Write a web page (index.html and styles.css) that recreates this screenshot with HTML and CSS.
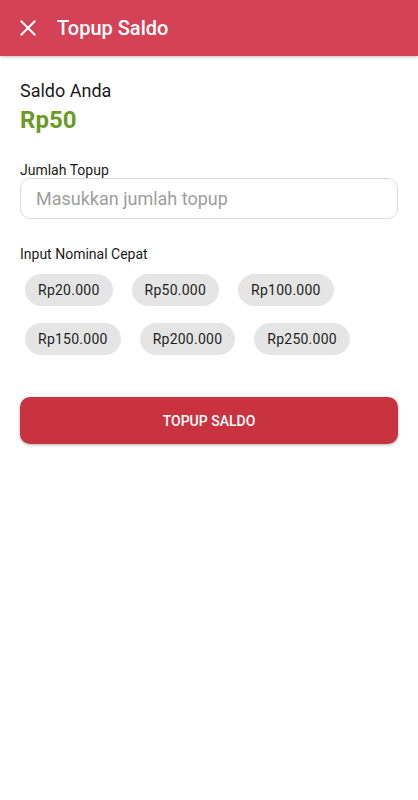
FILE: index.html
```html
<!DOCTYPE html>
<html lang="id">
  <head>
    <meta charset="UTF-8" />
    <meta name="viewport" content="width=device-width, initial-scale=1.0" />
    <title>Topup Saldo</title>
    <link rel="stylesheet" href="styles.css">
  </head>
  <body>
    <div class="appbar">
      <button class="close-btn" aria-label="Tutup">
        <svg width="16" height="16" viewBox="0 0 16 16">
          <path d="M1.5 1.5L14.5 14.5M14.5 1.5L1.5 14.5" stroke="#fff" stroke-width="2" stroke-linecap="square" />
        </svg>
      </button>
      <h1>Topup Saldo</h1>
    </div>
    <div class="content">
      <div class="saldo-label">Saldo Anda</div>
      <div class="saldo-value">Rp50</div>

      <label class="field-label" for="jumlah">Jumlah Topup</label>
      <input type="text" id="jumlah" class="field" placeholder="Masukkan jumlah topup" />

      <div class="field-label quick-label">Input Nominal Cepat</div>
      <div class="chips">
        <button class="chip">Rp20.000</button>
        <button class="chip">Rp50.000</button>
        <button class="chip">Rp100.000</button>
        <button class="chip">Rp150.000</button>
        <button class="chip">Rp200.000</button>
        <button class="chip">Rp250.000</button>
      </div>

      <button class="submit">TOPUP SALDO</button>
    </div>
  </body>
</html>
```

FILE: styles.css
```css
* {
  box-sizing: border-box;
}
body {
  margin: 0;
  background: #fff;
  font-family: Roboto, "Noto Sans", sans-serif;
  color: #1a1a1a;
}
.appbar {
  height: 56px;
  background: #d44257;
  display: flex;
  align-items: center;
  padding-left: 20px;
  box-shadow: 0 1px 3px rgba(0, 0, 0, 0.25);
}
.close-btn {
  background: none;
  border: none;
  padding: 0;
  width: 16px;
  height: 16px;
  display: flex;
}
.appbar h1 {
  margin: 0 0 0 21px;
  color: #fff;
  font-size: 20px;
  font-weight: 500;
}
.content {
  padding: 23px 20px;
}
.saldo-label {
  font-size: 18px;
  line-height: 24px;
}
.saldo-value {
  font-size: 24px;
  font-weight: 700;
  color: #6b9a26;
  line-height: 30px;
  margin-top: 2px;
}
.field-label {
  display: block;
  font-size: 14px;
  line-height: 14px;
  margin-top: 28px;
}
.field {
  display: block;
  width: 100%;
  height: 41px;
  margin-top: 1px;
  border: 1px solid #dcdcdc;
  border-radius: 10px;
  padding: 0 15px;
  font-family: inherit;
  font-size: 18px;
  outline: none;
}
.field::placeholder {
  color: #9e9e9e;
}
.quick-label {
  margin-top: 28px;
}
.chips {
  display: flex;
  flex-wrap: wrap;
  gap: 17px 19px;
  padding: 13px 5px 0;
}
.chip {
  height: 32px;
  border: none;
  border-radius: 16px;
  background: #e5e5e5;
  padding: 0 13px;
  font-family: inherit;
  font-size: 14px;
  letter-spacing: 0.25px;
  color: #1f1f1f;
}
.submit {
  display: block;
  width: 100%;
  height: 47px;
  margin-top: 42px;
  border: none;
  border-radius: 10px;
  background: #c9323f;
  color: #fff;
  font-family: inherit;
  font-size: 14px;
  font-weight: 500;
  box-shadow: 0 1px 3px rgba(0, 0, 0, 0.3);
}
```
